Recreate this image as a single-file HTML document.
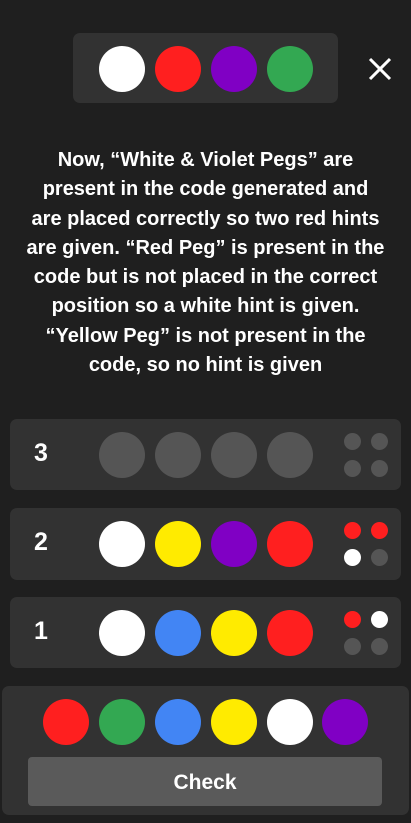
<!DOCTYPE html><html><head><style>
body{margin:0;width:411px;height:823px;background:#1f1f1f;position:relative;overflow:hidden;font-family:"Liberation Sans",sans-serif;color:#fff}
.a{position:absolute}
.c{position:absolute;width:46px;height:46px;border-radius:50%}
.d{position:absolute;width:17px;height:17px;border-radius:50%}
.p{position:absolute;background:#323232;border-radius:7px}
.n{position:absolute;left:34px;font-size:25px;font-weight:bold}
</style></head><body>
<div class="p" style="left:73px;top:33px;width:265px;height:70px"></div>
<div class="c" style="left:99px;top:46px;background:#fff"></div>
<div class="c" style="left:155px;top:46px;background:#ff1f1f"></div>
<div class="c" style="left:211px;top:46px;background:#8000c4"></div>
<div class="c" style="left:267px;top:46px;background:#33a852"></div>
<svg class="a" style="left:368px;top:57px" width="24" height="24"><path d="M2 2L22 22M22 2L2 22" stroke="#fff" stroke-width="3"/></svg>
<div class="a" style="left:0;top:146px;width:411px;text-align:center;font-size:20px;font-weight:bold;line-height:29.3px">Now, “White &amp; Violet Pegs” are<br>present in the code generated and<br>are placed correctly so two red hints<br>are given. “Red Peg” is present in the<br>code but is not placed in the correct<br>position so a white hint is given.<br>“Yellow Peg” is not present in the<br>code, so no hint is given</div>

<div class="p" style="left:10px;top:419px;width:391px;height:71px"></div>
<div class="n" style="top:439px">3</div>
<div class="c" style="left:99px;top:432px;background:#555"></div>
<div class="c" style="left:155px;top:432px;background:#555"></div>
<div class="c" style="left:211px;top:432px;background:#555"></div>
<div class="c" style="left:267px;top:432px;background:#555"></div>
<div class="d" style="left:344px;top:433px;background:#555"></div><div class="d" style="left:371px;top:433px;background:#555"></div>
<div class="d" style="left:344px;top:460px;background:#555"></div><div class="d" style="left:371px;top:460px;background:#555"></div>

<div class="p" style="left:10px;top:508px;width:391px;height:72px"></div>
<div class="n" style="top:528px">2</div>
<div class="c" style="left:99px;top:521px;background:#fff"></div>
<div class="c" style="left:155px;top:521px;background:#ffeb00"></div>
<div class="c" style="left:211px;top:521px;background:#8000c4"></div>
<div class="c" style="left:267px;top:521px;background:#ff1f1f"></div>
<div class="d" style="left:344px;top:522px;background:#ff1f1f"></div><div class="d" style="left:371px;top:522px;background:#ff1f1f"></div>
<div class="d" style="left:344px;top:549px;background:#fff"></div><div class="d" style="left:371px;top:549px;background:#555"></div>

<div class="p" style="left:10px;top:597px;width:391px;height:71px"></div>
<div class="n" style="top:617px">1</div>
<div class="c" style="left:99px;top:610px;background:#fff"></div>
<div class="c" style="left:155px;top:610px;background:#4285f4"></div>
<div class="c" style="left:211px;top:610px;background:#ffeb00"></div>
<div class="c" style="left:267px;top:610px;background:#ff1f1f"></div>
<div class="d" style="left:344px;top:611px;background:#ff1f1f"></div><div class="d" style="left:371px;top:611px;background:#fff"></div>
<div class="d" style="left:344px;top:638px;background:#555"></div><div class="d" style="left:371px;top:638px;background:#555"></div>

<div class="p" style="left:2px;top:686px;width:407px;height:129px"></div>
<div class="c" style="left:43px;top:699px;background:#ff1f1f"></div>
<div class="c" style="left:99px;top:699px;background:#33a852"></div>
<div class="c" style="left:155px;top:699px;background:#4285f4"></div>
<div class="c" style="left:211px;top:699px;background:#ffeb00"></div>
<div class="c" style="left:267px;top:699px;background:#fff"></div>
<div class="c" style="left:322px;top:699px;background:#8000c4"></div>
<div class="a" style="left:28px;top:757px;width:354px;height:49px;background:#5a5a5a;border-radius:4px;text-align:center;line-height:51px;font-size:21px;font-weight:bold">Check</div>
</body></html>
